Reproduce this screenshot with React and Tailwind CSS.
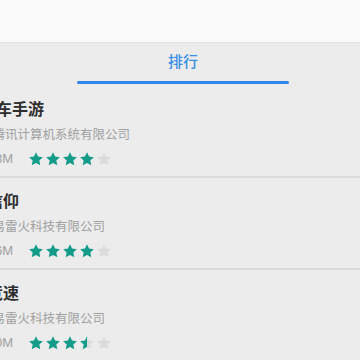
const GAMES = [
  { title: 'QQ飞车手游', company: '深圳市腾讯计算机系统有限公司', size: '1823M', rating: 4 },
  { title: '永恒信仰', company: '杭州网易雷火科技有限公司', size: '986M', rating: 4 },
  { title: '王牌竞速', company: '杭州网易雷火科技有限公司', size: '1540M', rating: 3.5 },
]

function Star({ fill, id }) {
  // fill: 1 full, 0.5 half, 0 empty
  const d = 'M12 1.8l3.1 6.6 7.2.9-5.3 5 1.4 7.1L12 17.9l-6.4 3.5 1.4-7.1-5.3-5 7.2-.9z'
  return (
    <svg viewBox="0 0 24 24" className="w-[16px] h-[16px]">
      {fill === 0.5 && (
        <defs>
          <linearGradient id={id}>
            <stop offset="50%" stopColor="#149c8a" />
            <stop offset="50%" stopColor="#dcdcdc" />
          </linearGradient>
        </defs>
      )}
      <path d={d} fill={fill === 1 ? '#149c8a' : fill === 0.5 ? `url(#${id})` : '#dcdcdc'} />
    </svg>
  )
}

function Stars({ rating, name }) {
  return (
    <div className="flex items-center gap-[1px]">
      {[1, 2, 3, 4, 5].map(i => (
        <Star key={i} id={`half-${name}-${i}`} fill={rating >= i ? 1 : rating >= i - 0.5 ? 0.5 : 0} />
      ))}
    </div>
  )
}

export default function App() {
  return (
    <div
      className="w-[360px] h-[360px] overflow-hidden bg-[#ececec]"
      style={{ fontFamily: '"Liberation Sans", "Noto Sans CJK SC", sans-serif' }}
    >
      {/* top bar */}
      <div className="h-[43px] bg-[#f9f9f9] border-b border-[#e4e4e4]" />

      {/* tab */}
      <div className="h-[43px] flex">
        <div className="ml-[77px] w-[212px] flex flex-col items-center">
          <div className="flex-1 flex items-center pt-[1px] text-[15px] font-medium text-[#3a8ee6]">排行</div>
          <div className="w-full h-[3px] rounded-full bg-[#2f88e8] mb-[2px]" />
        </div>
      </div>

      {/* list */}
      <div>
        {GAMES.map((g, idx) => (
          <div key={g.title}>
            <div className="h-[90px] ml-[-45px] flex flex-col pt-[14px]">
              <div className="text-[16px] leading-[20px] font-bold text-[#2e2e2e]">{g.title}</div>
              <div className="mt-[5px] text-[12.5px] leading-[20px] text-[#a0a0a0]">{g.company}</div>
              <div className="mt-[4px] flex items-center h-[20px]">
                <div className="w-[58px] text-right text-[13px] text-[#a0a0a0]">{g.size}</div>
                <div className="ml-[15px]">
                  <Stars rating={g.rating} name={idx} />
                </div>
              </div>
            </div>
            <div className="h-[2px] bg-[#dadada]" />
          </div>
        ))}
      </div>
    </div>
  )
}
